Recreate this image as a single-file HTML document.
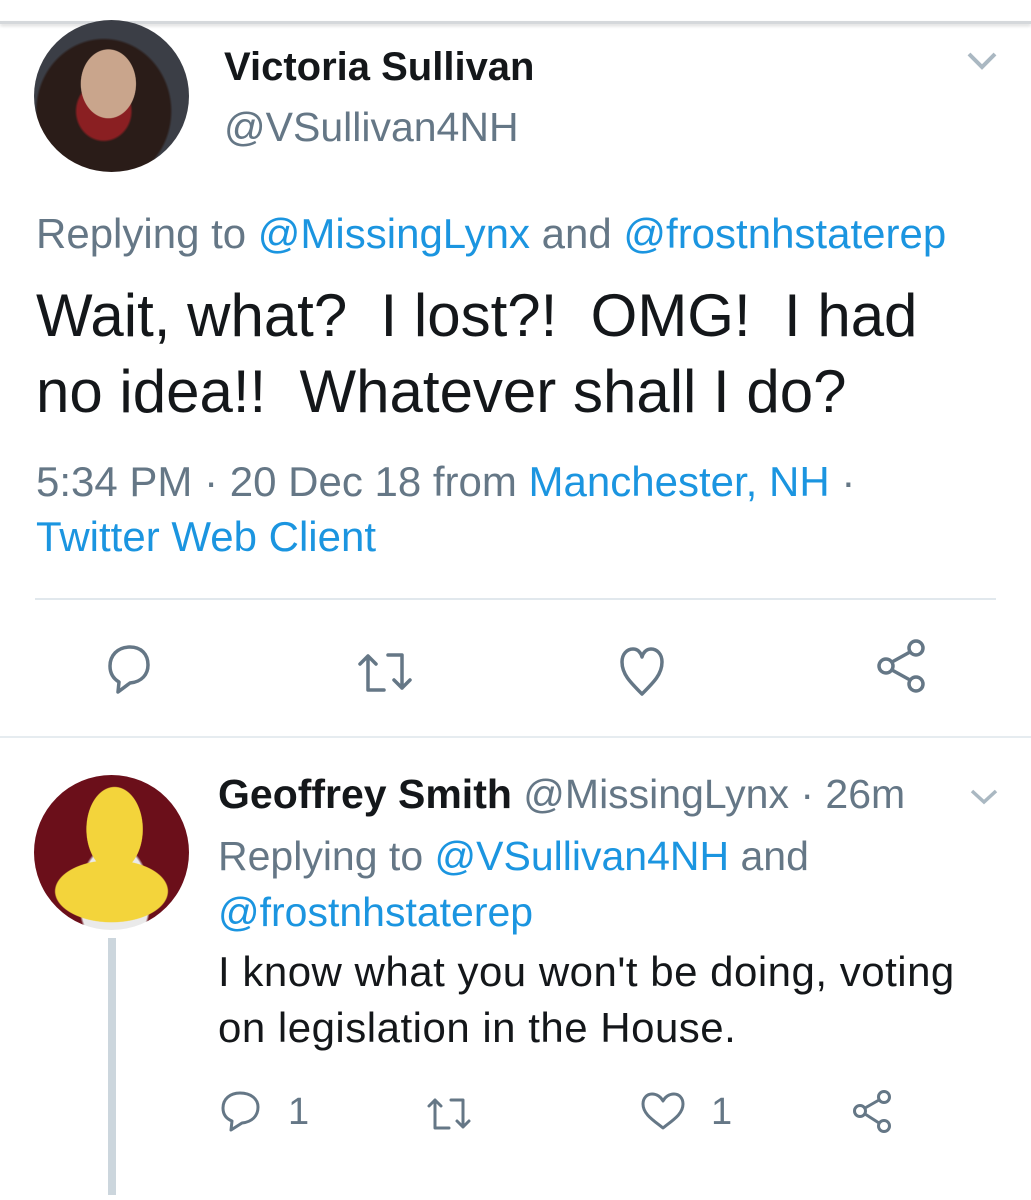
<!DOCTYPE html>
<html><head><meta charset="utf-8"><style>
body{margin:0;width:1031px;height:1200px;background:#fff;position:relative;overflow:hidden;font-family:"Liberation Sans",Arial,sans-serif;color:#14171a}
.a{position:absolute;white-space:nowrap;line-height:1}
.g{color:#657786}.b{color:#1b95e0}
svg{position:absolute}
</style></head><body>
<div style="position:absolute;left:0;top:21px;width:1031px;height:3px;background:#d5d8db;box-shadow:0 2px 3px rgba(0,0,0,.15)"></div>
<div style="position:absolute;left:34px;top:20px;width:155px;height:152px;border-radius:50%;background:radial-gradient(ellipse 22% 28% at 48% 42%,#c9a58c 0 80%,transparent 82%),radial-gradient(ellipse at 45% 60%,#8a1f22 0 22%,#2a1c18 24% 55%,#3b3e46 57%)"></div>
<div class="a" style="left:224px;top:47px;font-size:40px;font-weight:bold">Victoria Sullivan</div>
<div class="a g" style="left:224px;top:107px;font-size:41px">@VSullivan4NH</div>
<svg style="left:966px;top:50px" width="32" height="22"><path d="M3 4 L16 17 L29 4" fill="none" stroke="#aab8c2" stroke-width="4"/></svg>
<div class="a g" style="left:36px;top:213px;font-size:42px">Replying to <span class="b">@MissingLynx</span> and <span class="b">@frostnhstaterep</span></div>
<div class="a" style="left:36px;top:286px;font-size:60px;white-space:pre">Wait, what?  I lost?!  OMG!  I had</div>
<div class="a" style="left:36px;top:362px;font-size:60px;white-space:pre">no idea!!  Whatever shall I do?</div>
<div class="a g" style="left:36px;top:461px;font-size:42px">5:34 PM · 20 Dec 18 from <span class="b">Manchester, NH</span> ·</div>
<div class="a b" style="left:36px;top:516px;font-size:42px">Twitter Web Client</div>
<div style="position:absolute;left:35px;top:598px;width:961px;height:2px;background:#e1e8ed"></div>
<svg style="left:100px;top:640px" width="60" height="60" fill="none" stroke="#657786" stroke-width="3.5" stroke-linejoin="round"><path d="M30 7 C17 7 10 16 10 26 C10 34 14 39 19 42 L18 52 L30 43 C42 42 48 34 48 25 C48 14 41 7 30 7Z"/></svg>
<svg style="left:350px;top:640px" width="70" height="60" fill="none" stroke="#657786" stroke-width="3.5" stroke-linecap="round" stroke-linejoin="round"><path d="M18 50 V16 M10 24 L18 16 L26 24 M18 50 H34 M38 15 H52 V48 M44 40 L52 48 L60 40"/></svg>
<svg style="left:610px;top:640px" width="64" height="60" fill="none" stroke="#657786" stroke-width="3.5" stroke-linejoin="round"><path d="M32 54 C20 42 12 34 12 22 C12 14 17 9 23 9 C28 9 31 13 32 17 C33 13 36 9 41 9 C47 9 52 14 52 22 C52 34 44 42 32 54Z"/></svg>
<svg style="left:870px;top:636px" width="64" height="64" fill="none" stroke="#657786" stroke-width="3.5"><circle cx="46" cy="12" r="7"/><circle cx="46" cy="48" r="7"/><circle cx="16" cy="30" r="7"/><path d="M22 26 L40 16 M22 34 L40 44"/></svg>
<div style="position:absolute;left:0;top:736px;width:1031px;height:2px;background:#e6ecf0"></div>
<div style="position:absolute;left:34px;top:775px;width:155px;height:155px;border-radius:50%;background:radial-gradient(ellipse 20% 30% at 52% 35%,#f3d43b 0 90%,transparent 92%),radial-gradient(ellipse 40% 22% at 50% 75%,#f3d43b 0 90%,transparent 92%),radial-gradient(ellipse at 52% 80%,#eaeaea 0 30%,#6b0f1a 32%)"></div>
<div style="position:absolute;left:108px;top:938px;width:8px;height:257px;background:#ccd6dd"></div>
<div class="a" style="left:218px;top:774px;font-size:41px"><b>Geoffrey Smith</b> <span class="g">@MissingLynx · 26m</span></div>
<svg style="left:968px;top:786px" width="32" height="22"><path d="M4 5 L16 16 L28 5" fill="none" stroke="#aab8c2" stroke-width="3.5"/></svg>
<div class="a g" style="left:218px;top:836px;font-size:41px">Replying to <span class="b">@VSullivan4NH</span> and</div>
<div class="a b" style="left:218px;top:892px;font-size:41px">@frostnhstaterep</div>
<div class="a" style="left:218px;top:951px;font-size:42px;letter-spacing:0.5px">I know what you won't be doing, voting</div>
<div class="a" style="left:218px;top:1007px;font-size:42px;letter-spacing:0.5px">on legislation in the House.</div>
<svg style="left:218px;top:1088px" width="48" height="46" fill="none" stroke="#657786" stroke-width="3" stroke-linejoin="round"><path d="M22 5 C12 5 5 11 5 20 C5 27 9 31 14 33 L13 42 L24 35 C34 34 40 28 40 19 C40 11 33 5 22 5Z"/></svg>
<div class="a g" style="left:288px;top:1093px;font-size:38px">1</div>
<svg style="left:425px;top:1090px" width="56" height="46" fill="none" stroke="#657786" stroke-width="3" stroke-linecap="round" stroke-linejoin="round"><path d="M10 38 V10 M4 16 L10 10 L16 16 M10 38 H24 M26 10 H38 V37 M32 31 L38 37 L44 31"/></svg>
<svg style="left:638px;top:1088px" width="50" height="46" fill="none" stroke="#657786" stroke-width="3" stroke-linejoin="round"><path d="M25 40 C15 32 5 26 5 16 C5 10 9 6 14 6 C19 6 23 9 25 13 C27 9 31 6 36 6 C41 6 45 10 45 16 C45 26 35 32 25 40Z"/></svg>
<div class="a g" style="left:711px;top:1093px;font-size:38px">1</div>
<svg style="left:848px;top:1088px" width="50" height="48" fill="none" stroke="#657786" stroke-width="3"><circle cx="36" cy="9" r="5.5"/><circle cx="36" cy="38" r="5.5"/><circle cx="12" cy="23" r="5.5"/><path d="M17 20 L31 12 M17 26 L31 35"/></svg>
</body></html>
